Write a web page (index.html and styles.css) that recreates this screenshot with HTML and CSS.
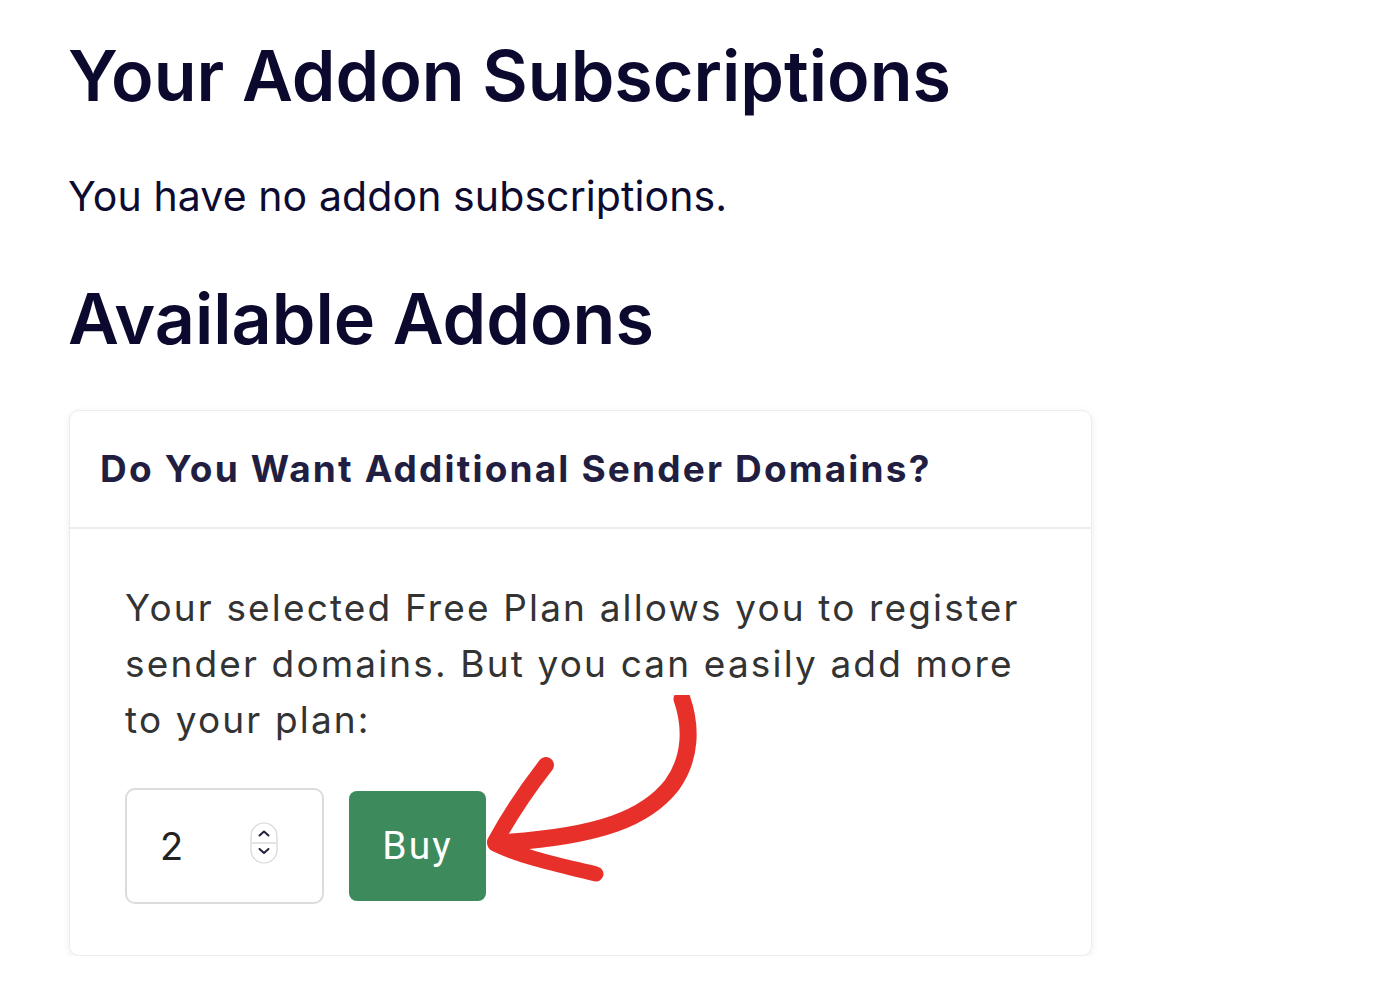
FILE: index.html
```html
<!DOCTYPE html>
<html lang="en">
<head>
<meta charset="utf-8">
<title>Addons</title>
<link rel="stylesheet" href="styles.css">
</head>
<body>
<main class="page">
  <h1 class="title">Your Addon Subscriptions</h1>
  <p class="note">You have no addon subscriptions.</p>
  <h1 class="title title-second">Available Addons</h1>
  <section class="card">
    <header class="card-head">
      <h2 class="card-title">Do You Want Additional Sender Domains?</h2>
    </header>
    <div class="card-body">
      <p class="card-text">Your selected Free Plan allows you to register sender domains. But you can easily add more to your plan:</p>
      <div class="buy-row">
        <div class="qty">
          <span class="qty-value">2</span>
          <span class="spinner">
            <svg width="28" height="42" viewBox="0 0 28 42">
              <rect x="1" y="1" width="26" height="40" rx="13" fill="#fff" stroke="#d6d6d6" stroke-width="1.2"/>
              <line x1="2" y1="21" x2="26" y2="21" stroke="#d0d0d0" stroke-width="1.2"/>
              <path d="M9.5 13.5 L14 9.5 L18.5 13.5" fill="none" stroke="#22223a" stroke-width="2" stroke-linecap="round" stroke-linejoin="round"/>
              <path d="M9.5 27 L14 31 L18.5 27" fill="none" stroke="#22223a" stroke-width="2" stroke-linecap="round" stroke-linejoin="round"/>
            </svg>
          </span>
        </div>
        <button class="buy-btn" type="button">Buy</button>
      </div>
    </div>
    <svg class="arrow" width="220" height="190" viewBox="0 0 220 190">
      <path d="M198 4 C207 30 208 62 188 90 C163 122 118 142 12 148" fill="none" stroke="#e8302a" stroke-width="17" stroke-linecap="round"/>
      <path d="M62 70 C44 93 28 116 11 147" fill="none" stroke="#e8302a" stroke-width="16" stroke-linecap="round"/>
      <path d="M11 149 C40 163 80 171 112 179" fill="none" stroke="#e8302a" stroke-width="15" stroke-linecap="round"/>
    </svg>
  </section>
</main>
</body>
</html>
```

FILE: styles.css
```css
* { box-sizing: border-box; }
html, body { margin: 0; padding: 0; background: #fff; }
body { font-family: "Inter", "Noto Sans", sans-serif; color: #0d0b30; }

.page {
  padding: 34px 0 0 68px;
  width: 1092px;
}

.title {
  margin: 0;
  font-size: 70px;
  font-weight: 600;
  line-height: 1.2;
  color: #0b0a2e;
  letter-spacing: 0;
}

.note {
  margin: 54px 0 0 0;
  font-size: 41px;
  line-height: 1.2;
  letter-spacing: 0.1px;
  color: #0d0b30;
}

.title-second {
  margin-top: 56px;
}

.card {
  position: relative;
  margin: 49px 0 0 1px;
  width: 1023px;
  background: #fff;
  border: 1px solid #ececec;
  border-radius: 10px;
  box-shadow: 0 2px 8px rgba(0, 0, 0, 0.07);
}

.card-head {
  padding: 36px 30px 36px 30px;
  border-bottom: 2px solid #ececec;
}

.card-title {
  margin: 0;
  font-size: 37px;
  font-weight: 700;
  line-height: 44px;
  letter-spacing: 2.16px;
  color: #211e42;
}

.card-body {
  padding: 51px 55px 51px 55px;
}

.card-text {
  margin: 0;
  font-size: 37px;
  line-height: 56px;
  letter-spacing: 2.15px;
  color: #333;
}

.buy-row {
  display: flex;
  align-items: center;
  gap: 25px;
  margin-top: 40px;
}

.qty {
  width: 199px;
  height: 116px;
  border: 2px solid #dcdcdc;
  border-radius: 10px;
  display: flex;
  align-items: center;
  padding: 0 44px 0 33px;
  justify-content: space-between;
}

.qty-value {
  font-family: "Inter", "Liberation Sans", sans-serif;
  font-size: 38px;
  color: #222;
}

.spinner { display: flex; margin-top: -6px; }

.buy-btn {
  width: 137px;
  height: 110px;
  border: 0;
  border-radius: 8px;
  background: #3d8a5c;
  color: #fff;
  font-family: "Roboto", "Liberation Sans", sans-serif;
  font-size: 39px;
  letter-spacing: 2px;
  padding: 0;
}

.arrow {
  position: absolute;
  left: 414px;
  top: 284px;
}
```
